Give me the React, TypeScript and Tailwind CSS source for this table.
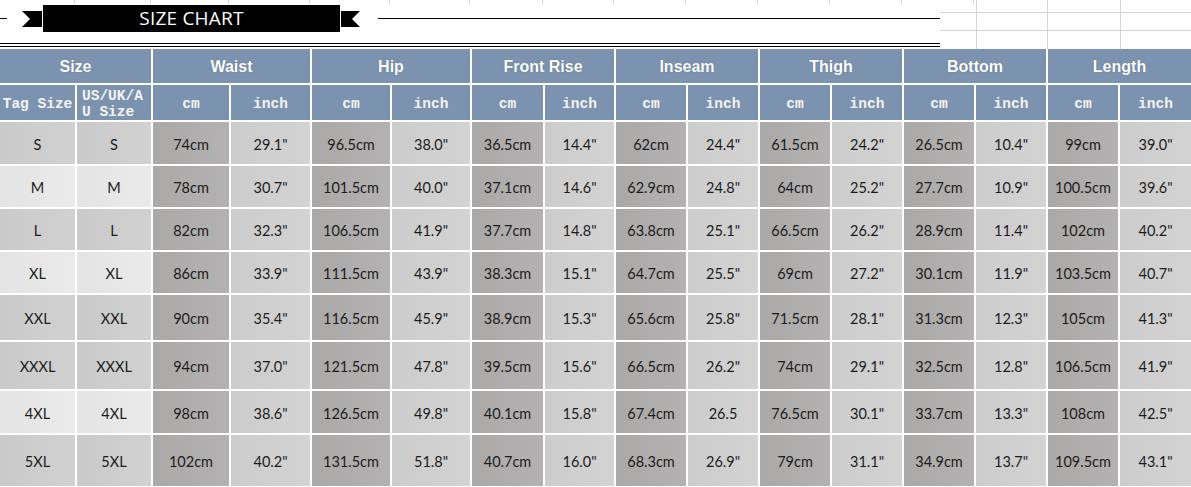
import React from 'react';

const groups = ['Waist', 'Hip', 'Front Rise', 'Inseam', 'Thigh', 'Bottom', 'Length'];

const rows = [
  ['S', 'S', '74cm', '29.1"', '96.5cm', '38.0"', '36.5cm', '14.4"', '62cm', '24.4"', '61.5cm', '24.2"', '26.5cm', '10.4"', '99cm', '39.0"'],
  ['M', 'M', '78cm', '30.7"', '101.5cm', '40.0"', '37.1cm', '14.6"', '62.9cm', '24.8"', '64cm', '25.2"', '27.7cm', '10.9"', '100.5cm', '39.6"'],
  ['L', 'L', '82cm', '32.3"', '106.5cm', '41.9"', '37.7cm', '14.8"', '63.8cm', '25.1"', '66.5cm', '26.2"', '28.9cm', '11.4"', '102cm', '40.2"'],
  ['XL', 'XL', '86cm', '33.9"', '111.5cm', '43.9"', '38.3cm', '15.1"', '64.7cm', '25.5"', '69cm', '27.2"', '30.1cm', '11.9"', '103.5cm', '40.7"'],
  ['XXL', 'XXL', '90cm', '35.4"', '116.5cm', '45.9"', '38.9cm', '15.3"', '65.6cm', '25.8"', '71.5cm', '28.1"', '31.3cm', '12.3"', '105cm', '41.3"'],
  ['XXXL', 'XXXL', '94cm', '37.0"', '121.5cm', '47.8"', '39.5cm', '15.6"', '66.5cm', '26.2"', '74cm', '29.1"', '32.5cm', '12.8"', '106.5cm', '41.9"'],
  ['4XL', '4XL', '98cm', '38.6"', '126.5cm', '49.8"', '40.1cm', '15.8"', '67.4cm', '26.5', '76.5cm', '30.1"', '33.7cm', '13.3"', '108cm', '42.5"'],
  ['5XL', '5XL', '102cm', '40.2"', '131.5cm', '51.8"', '40.7cm', '16.0"', '68.3cm', '26.9"', '79cm', '31.1"', '34.9cm', '13.7"', '109.5cm', '43.1"'],
];

// rows with the lighter fill in the size columns
const lightRows = [1, 3, 6];

const cols = 'grid-cols-[75px_74px_76px_79px_78px_78px_71px_69px_70px_70px_70px_70px_70px_70px_70px_71px]';

function cellClass(row: number, col: number) {
  if (col < 2) {
    return lightRows.includes(row)
      ? 'bg-gradient-to-r from-[#e4e4e4] to-[#eaeaea]'
      : 'bg-gradient-to-r from-[#cacaca] to-[#d1d1d1]';
  }
  return col % 2 === 0
    ? 'bg-gradient-to-r from-[#aba8a8] to-[#b3b1b1]'
    : 'bg-gradient-to-r from-[#cccccc] to-[#d3d3d3]';
}

export default function App() {
  return (
    <div className="w-[1191px] h-[487px] bg-white overflow-hidden">
      {/* Top banner area */}
      <div className="flex h-[49px]">
        <div className="w-[940px] flex flex-col">
          {/* faint sheet gridlines peeking above the banner */}
          <div className={`grid ${cols} gap-[2px] h-[5px]`}>
            {Array.from({ length: 13 }).map((_, i) => (
              <div key={i} className="border-r border-[#dcdcdc]" />
            ))}
          </div>
          <div className="flex items-center h-[27px]">
            <div className="w-[7px] h-px bg-black" />
            <div className="w-[15px]" />
            <svg width="20" height="16" viewBox="0 0 20 16">
              <polygon points="0,0 20,0 20,16 0,16 8,8" fill="#000" />
            </svg>
            <div className="w-px" />
            <div className="w-[297px] h-[27px] bg-black flex items-center justify-center text-white text-[19px] font-['Open_Sans',sans-serif] tracking-[0.2px]">
              SIZE CHART
            </div>
            <div className="w-px" />
            <svg width="19" height="16" viewBox="0 0 19 16">
              <polygon points="0,0 19,0 11,8 19,16 0,16" fill="#000" />
            </svg>
            <div className="w-[18px]" />
            <div className="flex-1 h-px bg-black" />
          </div>
          <div className="h-[11px]" />
          <div className="h-px bg-black" />
          <div className="h-[2px]" />
          <div className="h-px bg-black" />
        </div>
        <div className="flex-1 grid grid-cols-[36px_71px_73px_71px] grid-rows-[13px_18px_18px]">
          {Array.from({ length: 12 }).map((_, i) => (
            <div
              key={i}
              className={`${i % 4 !== 0 ? 'border-l border-[#d4d4d4]' : ''} ${i < 8 ? 'border-b border-[#d4d4d4]' : ''}`}
            />
          ))}
        </div>
      </div>

      {/* Table */}
      <div className={`grid ${cols} grid-rows-[34px_35px_42px_41px_41px_41px_45px_47px_42px_51px] gap-[2px] bg-white`}>
        <div className="col-span-2 bg-[#7c93af] flex items-center justify-center pt-[2px] text-white font-bold text-[16px] font-['Liberation_Sans',Arial,sans-serif] [text-shadow:0_0_1px_rgba(40,50,70,0.6)]">
          Size
        </div>
        {groups.map((g) => (
          <div
            key={g}
            className="col-span-2 bg-[#7c93af] flex items-center justify-center pt-[2px] text-white font-bold text-[16px] font-['Liberation_Sans',Arial,sans-serif] [text-shadow:0_0_1px_rgba(40,50,70,0.6)]"
          >
            {g}
          </div>
        ))}

        <div className="bg-[#7c93af] flex items-center justify-center pt-[4px] text-[#f4f4f4] font-bold text-[14.5px] font-['Liberation_Mono',monospace] whitespace-nowrap">
          Tag Size
        </div>
        <div className="bg-[#7c93af] flex flex-col justify-center pl-[5px] pt-[3px] text-[#f4f4f4] font-bold text-[14.5px] leading-[16px] font-['Liberation_Mono',monospace] whitespace-nowrap">
          <span>US/UK/A</span>
          <span>U Size</span>
        </div>
        {groups.map((g) => (
          <React.Fragment key={g}>
            <div className="bg-[#7c93af] flex items-center justify-center pt-[4px] text-[#f4f4f4] font-bold text-[14.5px] font-['Liberation_Mono',monospace]">
              cm
            </div>
            <div className="bg-[#7c93af] flex items-center justify-center pt-[4px] text-[#f4f4f4] font-bold text-[14.5px] font-['Liberation_Mono',monospace]">
              inch
            </div>
          </React.Fragment>
        ))}

        {rows.map((r, ri) =>
          r.map((v, ci) => (
            <div
              key={`${ri}-${ci}`}
              className={`${cellClass(ri, ci)} flex items-center justify-center pt-[3px] text-[#1c1c1c] text-[14.5px] font-['Lato',sans-serif] whitespace-nowrap`}
            >
              {v}
            </div>
          ))
        )}
      </div>
    </div>
  );
}
